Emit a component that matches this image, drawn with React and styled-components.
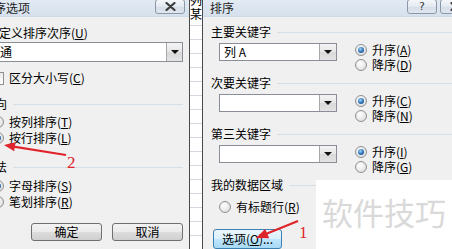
import React from "react"
import styled, { createGlobalStyle } from "styled-components"

const GlobalStyle = createGlobalStyle`
  html, body {
    margin: 0;
    padding: 0;
  }
  body {
    font-family: "Noto Sans CJK SC", "Noto Sans", sans-serif;
    font-size: 12px;
    color: #000;
  }
`

const Screen = styled.div`
  position: relative;
  display: flex;
  width: 452px;
  height: 249px;
  overflow: hidden;
  background: #f0f0f0;
`

const LeftDialog = styled.div`
  flex: none;
  width: 189px;
  overflow: hidden;
  border-right: 1px solid #4a4a4a;
`

const LeftInner = styled.div`
  display: flex;
  flex-direction: column;
  width: 219px;
  margin-left: -30px;
`

const RightDialog = styled.div`
  flex: 1;
  min-width: 0;
  display: flex;
  flex-direction: column;
`

const TitleBar = styled.div`
  flex: none;
  display: flex;
  align-items: center;
  height: 17px;
  padding-left: ${(p) => p.$left}px;
  background: linear-gradient(#e2eaf3, #d6e1ed);
  border-bottom: 1px solid #d0dae4;
  box-sizing: border-box;
`

const TitleText = styled.span`
  line-height: 16px;
  color: #1e1e1e;
  white-space: nowrap;
`

const CaptionButtons = styled.div`
  display: flex;
  gap: 3px;
  margin-left: auto;
  margin-right: ${(p) => p.$right}px;
  align-self: flex-start;
`

const CaptionButton = styled.div`
  flex: none;
  display: flex;
  align-items: center;
  justify-content: center;
  width: 30px;
  height: 15px;
  margin-top: -1px;
  border: 1px solid #8b98a8;
  border-radius: 3px;
  box-sizing: border-box;
  background: linear-gradient(#f4f7fa, #e3e9f0 50%, #d5dde7 51%, #dfe6ee);
  font-family: "DejaVu Sans", sans-serif;
  font-size: 11px;
  line-height: 13px;
  color: #3a3a3a;
`

const Label = styled.div`
  height: 14px;
  line-height: 14px;
  margin-top: ${(p) => p.$top || 0}px;
  padding-left: ${(p) => p.$left || 0}px;
  white-space: nowrap;
`

const GroupHeader = styled.div`
  display: flex;
  align-items: center;
  gap: 6px;
  height: 14px;
  line-height: 14px;
  margin-top: ${(p) => p.$top}px;
  padding-left: ${(p) => p.$left}px;
  padding-right: ${(p) => p.$right || 0}px;
  white-space: nowrap;

  &::after {
    content: "";
    flex: 1;
    height: 1px;
    background: #d5dfe5;
  }
`

const Select = styled.div`
  display: flex;
  align-items: center;
  height: ${(p) => p.$height}px;
  width: ${(p) => (p.$width ? `${p.$width}px` : "auto")};
  margin: ${(p) => p.$margin};
  padding-left: ${(p) => p.$pad}px;
  border: 1px solid #8a8e96;
  background: #fff;
  box-sizing: border-box;
  line-height: 14px;
  white-space: nowrap;
`

const DropButton = styled.div`
  display: flex;
  align-items: center;
  justify-content: center;
  width: ${(p) => p.$width}px;
  height: 100%;
  margin-left: auto;
  border-left: 1px solid #a7a7a7;
  background: linear-gradient(#f4f4f4, #e6e6e6 50%, #d9d9d9 51%, #e3e3e3);
  box-sizing: border-box;

  &::after {
    content: "";
    border-left: 4px solid transparent;
    border-right: 4px solid transparent;
    border-top: 4px solid #111;
  }
`

const OptionRow = styled.div`
  display: flex;
  align-items: center;
  gap: 5px;
  height: ${(p) => p.$height}px;
  line-height: ${(p) => p.$height}px;
  margin-top: ${(p) => p.$top || 0}px;
  padding-left: ${(p) => p.$left || 0}px;
  white-space: nowrap;
`

const Radio = styled.span`
  flex: none;
  position: relative;
  width: 12px;
  height: 12px;
  border: 1px solid #8f9092;
  border-radius: 50%;
  box-sizing: border-box;
  background: radial-gradient(circle at 40% 35%, #ffffff, #e2e2e2 70%, #cfcfcf);

  &::after {
    content: "";
    display: ${(p) => (p.$checked ? "block" : "none")};
    position: absolute;
    left: 2px;
    top: 2px;
    width: 6px;
    height: 6px;
    border-radius: 50%;
    background: radial-gradient(circle at 40% 35%, #9fd4f8, #2a6fb4 55%, #0f3f73);
  }
`

const Checkbox = styled.span`
  flex: none;
  width: 13px;
  height: 13px;
  border: 1px solid #8f9092;
  box-sizing: border-box;
  background: linear-gradient(135deg, #dcdcdc, #ffffff);
`

const ButtonRow = styled.div`
  display: flex;
  justify-content: flex-end;
  gap: 10px;
  margin-top: 13px;
  padding-right: 6px;
`

const PushButton = styled.div`
  display: flex;
  align-items: center;
  justify-content: center;
  width: ${(p) => p.$width}px;
  height: ${(p) => p.$height}px;
  margin-top: ${(p) => p.$top || 0}px;
  margin-left: ${(p) => p.$left || 0}px;
  border: 1px solid ${(p) => (p.$focused ? "#3c7fb1" : "#707070")};
  border-radius: 3px;
  box-sizing: border-box;
  background: ${(p) =>
    p.$focused
      ? "linear-gradient(#eaf6fd, #d9f0fc 50%, #bee6fd 51%, #a7d9f5)"
      : "linear-gradient(#f2f2f2, #ebebeb 50%, #dddddd 51%, #cfcfcf)"};
  line-height: 14px;
  white-space: nowrap;
`

const Strip = styled.div`
  flex: none;
  width: 12px;
  overflow: hidden;
  border-right: 1px solid #4a4a4a;
  background-color: #fff;
  background-image: repeating-linear-gradient(
    to bottom,
    transparent 0,
    transparent 13px,
    #d4d8de 13px,
    #d4d8de 14px
  );
  background-position: 0 12px;
`

const StripText = styled.div`
  margin-top: -7px;
  font-size: 12px;
  line-height: 14px;
  text-align: center;
`

const KeyRow = styled.div`
  display: flex;
  align-items: flex-start;
  margin-top: 3px;
  padding-left: 16px;
`

const RadioColumn = styled.div`
  display: flex;
  flex-direction: column;
  margin-left: 18px;
`

const Watermark = styled.div`
  position: absolute;
  left: 316px;
  top: 180px;
  width: 136px;
  height: 69px;
  padding: 16px 0 0 6px;
  box-sizing: border-box;
  background: #fff;
  color: #d9d9d9;
  font-size: 31px;
  line-height: 31px;
  white-space: nowrap;
`

const Annotations = styled.svg`
  position: absolute;
  left: 0;
  top: 0;
  pointer-events: none;
`

const StepNumber = styled.div`
  position: absolute;
  left: ${(p) => p.$x}px;
  top: ${(p) => p.$y}px;
  font-family: "Liberation Serif", serif;
  font-size: 17px;
  line-height: 17px;
  color: #e0242b;
`

const Key = ({ children }) => <u>{children}</u>

function CloseGlyph() {
  return (
    <svg width="11" height="9" viewBox="0 0 11 9">
      <path
        d="M1.5 1 L9.5 8 M9.5 1 L1.5 8"
        stroke="#3b3b3b"
        strokeWidth="2.2"
        strokeLinecap="round"
      />
    </svg>
  )
}

function SortKey({ title, top, value, up, down, checked = "up" }) {
  return (
    <>
      <GroupHeader $top={top} $left={8}>
        {title}
      </GroupHeader>
      <KeyRow>
        <Select $height={18} $width={118} $margin="1px 0 0 0" $pad={4}>
          {value}
          <DropButton $width={17} />
        </Select>
        <RadioColumn>
          <OptionRow $height={15}>
            <Radio $checked={checked === "up"} />
            <span>
              升序(<Key>{up}</Key>)
            </span>
          </OptionRow>
          <OptionRow $height={15}>
            <Radio $checked={checked === "down"} />
            <span>
              降序(<Key>{down}</Key>)
            </span>
          </OptionRow>
        </RadioColumn>
      </KeyRow>
    </>
  )
}

export default function App() {
  return (
    <>
      <GlobalStyle />
      <Screen>
        <LeftDialog>
          <LeftInner>
            <TitleBar $left={12}>
              <TitleText>排序选项</TitleText>
              <CaptionButtons $right={4}>
                <CaptionButton>
                  <CloseGlyph />
                </CaptionButton>
              </CaptionButtons>
            </TitleBar>
            <Label $top={9} $left={17}>
              自定义排序次序(<Key>U</Key>)
            </Label>
            <Select $height={20} $margin="2px 6px 0 10px" $pad={7}>
              普通
              <DropButton $width={16} />
            </Select>
            <OptionRow $height={14} $top={9} $left={21}>
              <Checkbox />
              <span>
                区分大小写(<Key>C</Key>)
              </span>
            </OptionRow>
            <GroupHeader $top={12} $left={13} $right={6}>
              方向
            </GroupHeader>
            <OptionRow $height={16} $top={3} $left={22}>
              <Radio />
              <span>
                按列排序(<Key>T</Key>)
              </span>
            </OptionRow>
            <OptionRow $height={16} $left={22}>
              <Radio $checked />
              <span>
                按行排序(<Key>L</Key>)
              </span>
            </OptionRow>
            <GroupHeader $top={14} $left={13} $right={6}>
              方法
            </GroupHeader>
            <OptionRow $height={16} $top={4} $left={22}>
              <Radio $checked />
              <span>
                字母排序(<Key>S</Key>)
              </span>
            </OptionRow>
            <OptionRow $height={16} $left={22}>
              <Radio />
              <span>
                笔划排序(<Key>R</Key>)
              </span>
            </OptionRow>
            <ButtonRow>
              <PushButton $width={71} $height={18}>
                确定
              </PushButton>
              <PushButton $width={71} $height={18}>
                取消
              </PushButton>
            </ButtonRow>
          </LeftInner>
        </LeftDialog>

        <Strip>
          <StripText>
            列
            <br />某
          </StripText>
        </Strip>

        <RightDialog>
          <TitleBar $left={7}>
            <TitleText>排序</TitleText>
            <CaptionButtons $right={-18}>
              <CaptionButton>?</CaptionButton>
              <CaptionButton>
                <CloseGlyph />
              </CaptionButton>
            </CaptionButtons>
          </TitleBar>
          <SortKey title="主要关键字" top={8} value="列 A" up="A" down="D" />
          <SortKey title="次要关键字" top={4} value="" up="C" down="N" />
          <SortKey title="第三关键字" top={4} value="" up="I" down="G" />
          <GroupHeader $top={4} $left={8}>
            我的数据区域
          </GroupHeader>
          <OptionRow $height={15} $top={7} $left={16}>
            <Radio />
            <span>
              有标题行(<Key>R</Key>)
            </span>
          </OptionRow>
          <PushButton $width={69} $height={21} $top={15} $left={10} $focused>
            选项(<Key>O</Key>)...
          </PushButton>
        </RightDialog>

        <Watermark>软件技巧</Watermark>

        <Annotations width="452" height="249" viewBox="0 0 452 249">
          <line x1="66" y1="155" x2="12" y2="146.4" stroke="#e0242b" strokeWidth="2.2" />
          <polygon points="4,145 15.5,142.3 14.2,151.2" fill="#e0242b" />
          <line x1="298" y1="221" x2="264" y2="234.8" stroke="#e0242b" strokeWidth="2.2" />
          <polygon points="256,238 269.2,238.2 265.2,229" fill="#e0242b" />
        </Annotations>
        <StepNumber $x={67} $y={154}>
          2
        </StepNumber>
        <StepNumber $x={299} $y={224}>
          1
        </StepNumber>
      </Screen>
    </>
  )
}
